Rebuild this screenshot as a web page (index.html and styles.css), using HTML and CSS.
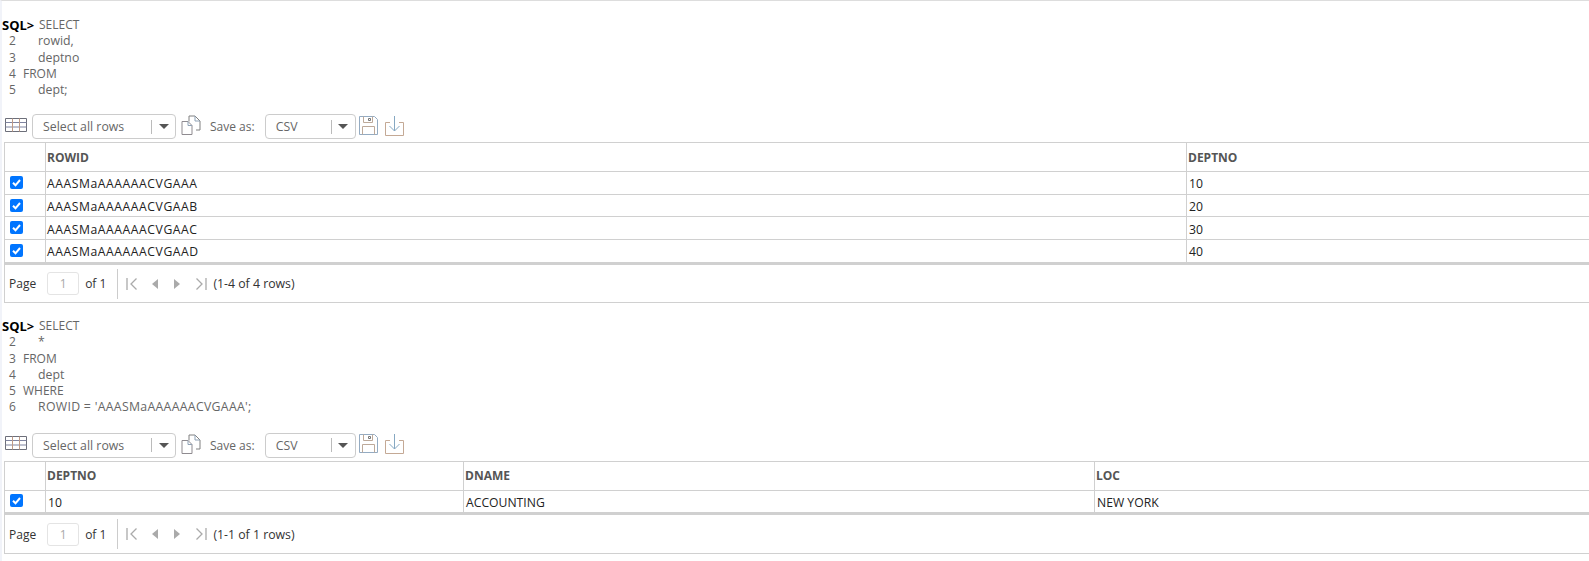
FILE: index.html
```html
<!DOCTYPE html>
<html lang="en">
<head>
<meta charset="utf-8">
<title>SQL output</title>
<link rel="stylesheet" href="styles.css">
</head>
<body>
<svg class="defs" width="0" height="0" aria-hidden="true">
  <defs>
    <symbol id="i-table" viewBox="0 0 22 14">
      <path d="M.5.500h21v13H.5z" fill="#fff" stroke="#6d6f7a"/>
      <path d="M.5 4.500h21M.5 9h21" stroke="#7f84a0" fill="none"/>
      <path d="M7.500.500v13M14.500.500v13" stroke="#c09a84" fill="none"/>
    </symbol>
    <symbol id="i-copy" viewBox="0 0 20 20">
      <path d="M1 6.500h6l4 4v9H1z" fill="#fff" stroke="#8f8b90"/>
      <path d="M8 6.500V1h6l5 5v9h-4" fill="none" stroke="#808080"/>
      <path d="M14 1v5h5M7 6.500v4h4" fill="none" stroke="#8fa2b6"/>
    </symbol>
    <symbol id="i-save" viewBox="0 0 19 19">
      <path d="M.5.500h15l3 3v15H.5z" fill="#fff" stroke="#94abc2"/>
      <path d="M4.500.500v6h9v-6M3.500 18.500v-8h12v8" fill="none" stroke="#bda999"/>
      <path d="M9.500 2.500h2v2h-2z" fill="none" stroke="#777"/>
    </symbol>
    <symbol id="i-down" viewBox="0 0 19 20">
      <path d="M5 6.500H.5v13h18v-13H14" fill="none" stroke="#c4a995"/>
      <path d="M9.500 0v15M4.500 10l5 5 5-5" fill="none" stroke="#86a8c2"/>
    </symbol>
    <symbol id="i-first" viewBox="0 0 12 12">
      <path d="M1 0v12" stroke="#aaa" stroke-width="1.300" fill="none"/>
      <path d="M10.500.500 5 6l5.500 5.500" stroke="#aaa" stroke-width="1.300" fill="none"/>
    </symbol>
    <symbol id="i-last" viewBox="0 0 12 12">
      <path d="M11 0v12" stroke="#aaa" stroke-width="1.300" fill="none"/>
      <path d="M1.500.500 7 6l-5.500 5.500" stroke="#aaa" stroke-width="1.300" fill="none"/>
    </symbol>
    <symbol id="i-prev" viewBox="0 0 6 10"><path d="M6 0v10L0 5z" fill="#aaa"/></symbol>
    <symbol id="i-next" viewBox="0 0 6 10"><path d="M0 0v10l6-5z" fill="#aaa"/></symbol>
  </defs>
</svg>

<main class="page">
  <section class="block">
    <div class="sql">
      <div class="line"><b class="prompt">SQL&gt;</b><span class="first">SELECT</span></div>
      <div class="line"><span class="num">2</span><span class="ind">rowid,</span></div>
      <div class="line"><span class="num">3</span><span class="ind">deptno</span></div>
      <div class="line"><span class="num">4</span><span class="kw">FROM</span></div>
      <div class="line"><span class="num">5</span><span class="ind">dept;</span></div>
    </div>
    <div class="toolbar">
      <svg class="ico-table"><use href="#i-table"/></svg>
      <div class="select sel-rows"><span class="val">Select all rows</span><span class="caret-box"><i class="caret"></i></span></div>
      <svg class="ico-copy"><use href="#i-copy"/></svg>
      <span class="save-label">Save as:</span>
      <div class="select sel-csv"><span class="val">CSV</span><span class="caret-box"><i class="caret"></i></span></div>
      <svg class="ico-save"><use href="#i-save"/></svg>
      <svg class="ico-down"><use href="#i-down"/></svg>
    </div>
    <table class="grid">
      <colgroup><col class="c-check"><col class="c-rowid"><col></colgroup>
      <thead><tr><th></th><th>ROWID</th><th>DEPTNO</th></tr></thead>
      <tbody>
        <tr><td class="chk"><span class="box"></span></td><td class="rid">AAASMaAAAAAACVGAAA</td><td>10</td></tr>
        <tr><td class="chk"><span class="box"></span></td><td class="rid">AAASMaAAAAAACVGAAB</td><td>20</td></tr>
        <tr><td class="chk"><span class="box"></span></td><td class="rid">AAASMaAAAAAACVGAAC</td><td>30</td></tr>
        <tr><td class="chk"><span class="box"></span></td><td class="rid">AAASMaAAAAAACVGAAD</td><td>40</td></tr>
      </tbody>
    </table>
    <div class="pager">
      <span>Page</span><span class="pg-input">1</span><span>of 1</span><span class="sep"></span>
      <svg class="p-first"><use href="#i-first"/></svg>
      <svg class="p-arrow"><use href="#i-prev"/></svg>
      <svg class="p-arrow"><use href="#i-next"/></svg>
      <svg class="p-last"><use href="#i-last"/></svg>
      <span class="range">(1-4 of 4 rows)</span>
    </div>
  </section>

  <section class="block second">
    <div class="sql">
      <div class="line"><b class="prompt">SQL&gt;</b><span class="first">SELECT</span></div>
      <div class="line"><span class="num">2</span><span class="ind">*</span></div>
      <div class="line"><span class="num">3</span><span class="kw">FROM</span></div>
      <div class="line"><span class="num">4</span><span class="ind">dept</span></div>
      <div class="line"><span class="num">5</span><span class="kw">WHERE</span></div>
      <div class="line"><span class="num">6</span><span class="ind rid-sql">ROWID = 'AAASMaAAAAAACVGAAA';</span></div>
    </div>
    <div class="toolbar">
      <svg class="ico-table"><use href="#i-table"/></svg>
      <div class="select sel-rows"><span class="val">Select all rows</span><span class="caret-box"><i class="caret"></i></span></div>
      <svg class="ico-copy"><use href="#i-copy"/></svg>
      <span class="save-label">Save as:</span>
      <div class="select sel-csv"><span class="val">CSV</span><span class="caret-box"><i class="caret"></i></span></div>
      <svg class="ico-save"><use href="#i-save"/></svg>
      <svg class="ico-down"><use href="#i-down"/></svg>
    </div>
    <table class="grid">
      <colgroup><col class="c-check"><col class="c-deptno"><col class="c-dname"><col></colgroup>
      <thead><tr><th></th><th>DEPTNO</th><th>DNAME</th><th>LOC</th></tr></thead>
      <tbody>
        <tr><td class="chk"><span class="box"></span></td><td>10</td><td>ACCOUNTING</td><td>NEW YORK</td></tr>
      </tbody>
    </table>
    <div class="pager">
      <span>Page</span><span class="pg-input">1</span><span>of 1</span><span class="sep"></span>
      <svg class="p-first"><use href="#i-first"/></svg>
      <svg class="p-arrow"><use href="#i-prev"/></svg>
      <svg class="p-arrow"><use href="#i-next"/></svg>
      <svg class="p-last"><use href="#i-last"/></svg>
      <span class="range">(1-1 of 1 rows)</span>
    </div>
  </section>
</main>
</body>
</html>
```

FILE: styles.css
```css
html, body { margin: 0; padding: 0; background: #fff; }
body {
  font-family: "Open Sans", "Noto Sans", "Liberation Sans", sans-serif;
  font-size: 12px;
  color: #555;
  height: 561px;
  overflow: hidden;
}
.defs { position: absolute; }
.page {
  border-top: 1px solid #ddd;
  border-left: 2px solid #f1f3f9;
  padding-top: 16px;
  height: 561px;
  box-sizing: border-box;
}
.block.second { margin-top: 15px; }
.sql { line-height: 16.250px; }
.line { display: flex; white-space: pre; }
.prompt { color: #000; font-size: 13px; margin-right: 5px; width: 32px; }
.first { color: #666; }
.num { color: #666; width: 7px; margin-left: 7px; }
.ind { color: #666; margin-left: 22px; font-size: 12.300px; }
.rid-sql { letter-spacing: .300px; }
.kw { color: #666; margin-left: 7px; }
.toolbar {
  display: flex;
  align-items: center;
  height: 25px;
  margin-top: 16px;
  margin-bottom: 3px;
  padding-left: 3px;
}
.second .toolbar { margin-top: 17px; }
.ico-table { width: 22px; height: 14px; margin-right: 5px; margin-top: -4px; }
.select {
  display: flex;
  align-items: center;
  height: 25px;
  box-sizing: border-box;
  border: 1px solid #ccc;
  border-radius: 4px;
  background: #fff;
}
.val { flex: 1; padding-left: 10px; color: #666; font-size: 12.300px; }
.caret-box {
  width: 23px;
  height: 14px;
  border-left: 1px solid #bbb;
  display: flex;
  justify-content: center;
  align-items: center;
}
.caret {
  width: 0; height: 0;
  border-left: 5px solid transparent;
  border-right: 5px solid transparent;
  border-top: 5px solid #555;
}
.sel-rows { width: 144px; }
.sel-csv { width: 91px; }
.ico-copy { width: 20px; height: 20px; margin-left: 5px; margin-bottom: 3px; }
.save-label { margin-left: 9px; margin-right: 10px; color: #666; }
.ico-save { width: 19px; height: 19px; margin-left: 3px; margin-bottom: 3px; }
.ico-down { width: 19px; height: 20px; margin-left: 7px; margin-bottom: 2px; }
.grid {
  border-collapse: collapse;
  table-layout: fixed;
  width: 1600px;
  margin-left: 2px;
}
.c-check { width: 41px; }
.c-rowid { width: 1141px; }
.c-deptno { width: 418px; }
.c-dname { width: 631px; }
.grid th, .grid td {
  border: 1px solid #d0d0d0;
  padding: 0 0 0 2px;
  text-align: left;
  white-space: nowrap;
  overflow: hidden;
}
.grid th { height: 28px; font-weight: 700; color: #555; padding-left: 1px; }
.grid td { height: 20px; color: #222; padding-top: 1.600px; font-size: 12.200px; }
.grid td.rid { letter-spacing: .550px; padding-left: 1px; }
.grid tbody tr:last-child td { border-bottom: 3px solid #d0d0d0; }
.grid td.chk { padding: 0 0 1px 5px; }
.box {
  display: block;
  width: 13px;
  height: 13px;
  border-radius: 2px;
  background-color: #0075ff;
  background-image: url("data:image/svg+xml,%3Csvg xmlns='http://www.w3.org/2000/svg' viewBox='0 0 13 13'%3E%3Cpath d='M3 6.800l2.500 2.500L10 4' fill='none' stroke='%23fff' stroke-width='2'/%3E%3C/svg%3E");
}
.pager {
  display: flex;
  align-items: center;
  height: 36.500px;
  padding-top: 1px;
  margin-left: 2px;
  width: 1600px;
  border-left: 1px solid #d0d0d0;
  border-bottom: 1px solid #d0d0d0;
  padding-left: 4px;
  color: #333;
}
.pg-input {
  width: 32px;
  height: 23px;
  box-sizing: border-box;
  border: 1px solid #e4e4e4;
  border-radius: 3px;
  margin: 0 6px 0 11px;
  text-align: center;
  line-height: 22px;
  color: #aaa;
}
.sep { width: 1px; height: 30px; background: #ccc; margin: 0 8px 0 11px; }
.p-first, .p-last { width: 12px; height: 12px; }
.p-arrow { width: 6px; height: 10px; }
.p-first + .p-arrow { margin-left: 14px; }
.p-arrow + .p-arrow { margin-left: 16px; }
.p-arrow + .p-last { margin-left: 15px; }
.range { margin-left: 6px; color: #333; font-size: 12.300px; }
```
